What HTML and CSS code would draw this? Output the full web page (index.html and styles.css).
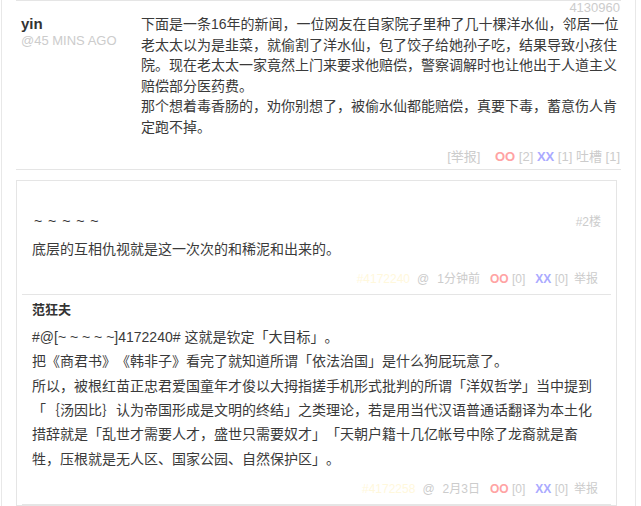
FILE: index.html
```html
<!DOCTYPE html>
<html lang="zh-CN">
<head>
<meta charset="utf-8">
<title>评论</title>
<link rel="stylesheet" href="styles.css">
</head>
<body>
<div class="wrap">
  <div class="comment">
    <div class="author">
      <div class="name">yin</div>
      <div class="time">@45 MINS AGO</div>
    </div>
    <div class="main">
      <div class="cid">4130960</div>
      <div class="text">下面是一条16年的新闻，一位网友在自家院子里种了几十棵洋水仙，邻居一位老太太以为是韭菜，就偷割了洋水仙，包了饺子给她孙子吃，结果导致小孩住院。现在老太太一家竟然上门来要求他赔偿，警察调解时也让他出于人道主义赔偿部分医药费。<br>那个想着毒香肠的，劝你别想了，被偷水仙都能赔偿，真要下毒，蓄意伤人肯定跑不掉。</div>
      <div class="vote"><span class="report">[举报]</span> <b class="oo">OO</b> [2] <b class="xx">XX</b> [1] 吐槽 [1]</div>
    </div>
  </div>
  <div class="tucao">
    <div class="row first">
      <div class="rhead"><span class="rname tilde">~ ~ ~ ~ ~</span><span class="floor">#2楼</span></div>
      <div class="rtext">底层的互相仇视就是这一次次的和稀泥和出来的。</div>
      <div class="rfoot"><span class="tid">#4172240</span><span class="at">@</span><span class="rtime">1分钟前</span><span class="g"><b class="oo">OO</b> [0]</span><span class="g"><b class="xx">XX</b> [0]</span><span class="rep">举报</span></div>
    </div>
    <div class="row">
      <div class="rhead"><span class="rname">范狂夫</span></div>
      <div class="rtext">#@[~ ~ ~ ~ ~]4172240# 这就是钦定「大目标」。<br>把《商君书》《韩非子》看完了就知道所谓「依法治国」是什么狗屁玩意了。<br>所以，被根红苗正忠君爱国童年才俊以大拇指搓手机形式批判的所谓「洋奴哲学」当中提到「｛汤因比｝认为帝国形成是文明的终结」之类理论，若是用当代汉语普通话翻译为本土化措辞就是「乱世才需要人才，盛世只需要奴才」「天朝户籍十几亿帐号中除了龙裔就是畜牲，压根就是无人区、国家公园、自然保护区」。</div>
      <div class="rfoot"><span class="tid">#4172258</span><span class="at">@</span><span class="rtime">2月3日</span><span class="g"><b class="oo">OO</b> [0]</span><span class="g"><b class="xx">XX</b> [0]</span><span class="rep">举报</span></div>
    </div>
  </div>
</div>
</body>
</html>
```
FILE: styles.css
```css
html, body {
  margin: 0;
  padding: 0;
  background: #fff;
}
body {
  font-family: "Liberation Sans", "Noto Sans CJK SC", sans-serif;
  color: #333;
  text-spacing-trim: space-all;
}
.wrap {
  margin-left: 1px;
  width: 605px;
  height: 506px;
  overflow: hidden;
  border-left: 1px solid #e8e8e8;
  border-right: 1px solid #e8e8e8;
  padding: 0 14px;
}
.comment {
  display: flex;
  border-top: 1px solid #e5e5e5;
  border-bottom: 1px solid #e5e5e5;
}
.author {
  width: 120px;
  padding: 14px 0 0 5px;
}
.name {
  font-size: 15px;
  font-weight: bold;
  line-height: 18px;
  color: #333;
}
.time {
  font-size: 13px;
  line-height: 16px;
  color: #ccc;
}
.main {
  width: 480px;
  padding-bottom: 2px;
}
.cid {
  text-align: right;
  font-size: 13px;
  line-height: 13px;
  height: 13px;
  color: #ccc;
  padding-right: 1px;
}
.text {
  font-size: 14px;
  line-height: 20.6px;
  color: #3a3a3a;
}
.vote {
  margin-top: 9.4px;
  text-align: right;
  font-size: 13px;
  line-height: 20px;
  color: #ccc;
  padding-right: 1px;
}
.report {
  margin-right: 11px;
}
.oo {
  color: #ffa3a3;
}
.xx {
  color: #aaaaff;
}
.tucao {
  margin: 10px 4px 0 0;
  border: 1px solid #e5e5e5;
  padding: 0 5px;
}
.row {
  border-bottom: 1px solid #e5e5e5;
  padding: 5px 10px 5px;
}
.row.first {
  padding-top: 30px;
}
.rhead {
  display: flex;
  justify-content: space-between;
  align-items: baseline;
  line-height: 20px;
}
.rname {
  font-weight: bold;
  font-size: 13px;
  color: #333;
}
.rname.tilde {
  font-weight: normal;
  font-size: 14px;
  letter-spacing: 1px;
  padding-left: 2px;
}
.floor {
  font-size: 12px;
  color: #ccc;
}
.rtext {
  margin-top: 5px;
  font-size: 14px;
  line-height: 24.4px;
  color: #3a3a3a;
}
.rfoot {
  margin-top: 7.5px;
  text-align: right;
  font-size: 12px;
  line-height: 20px;
  color: #ccc;
  padding-right: 3px;
}
.tid {
  color: #fff8dc;
}
.at {
  margin-left: 7px;
}
.rtime {
  margin-left: 8px;
}
.g {
  margin-left: 10px;
}
.rep {
  margin-left: 6px;
}
```
